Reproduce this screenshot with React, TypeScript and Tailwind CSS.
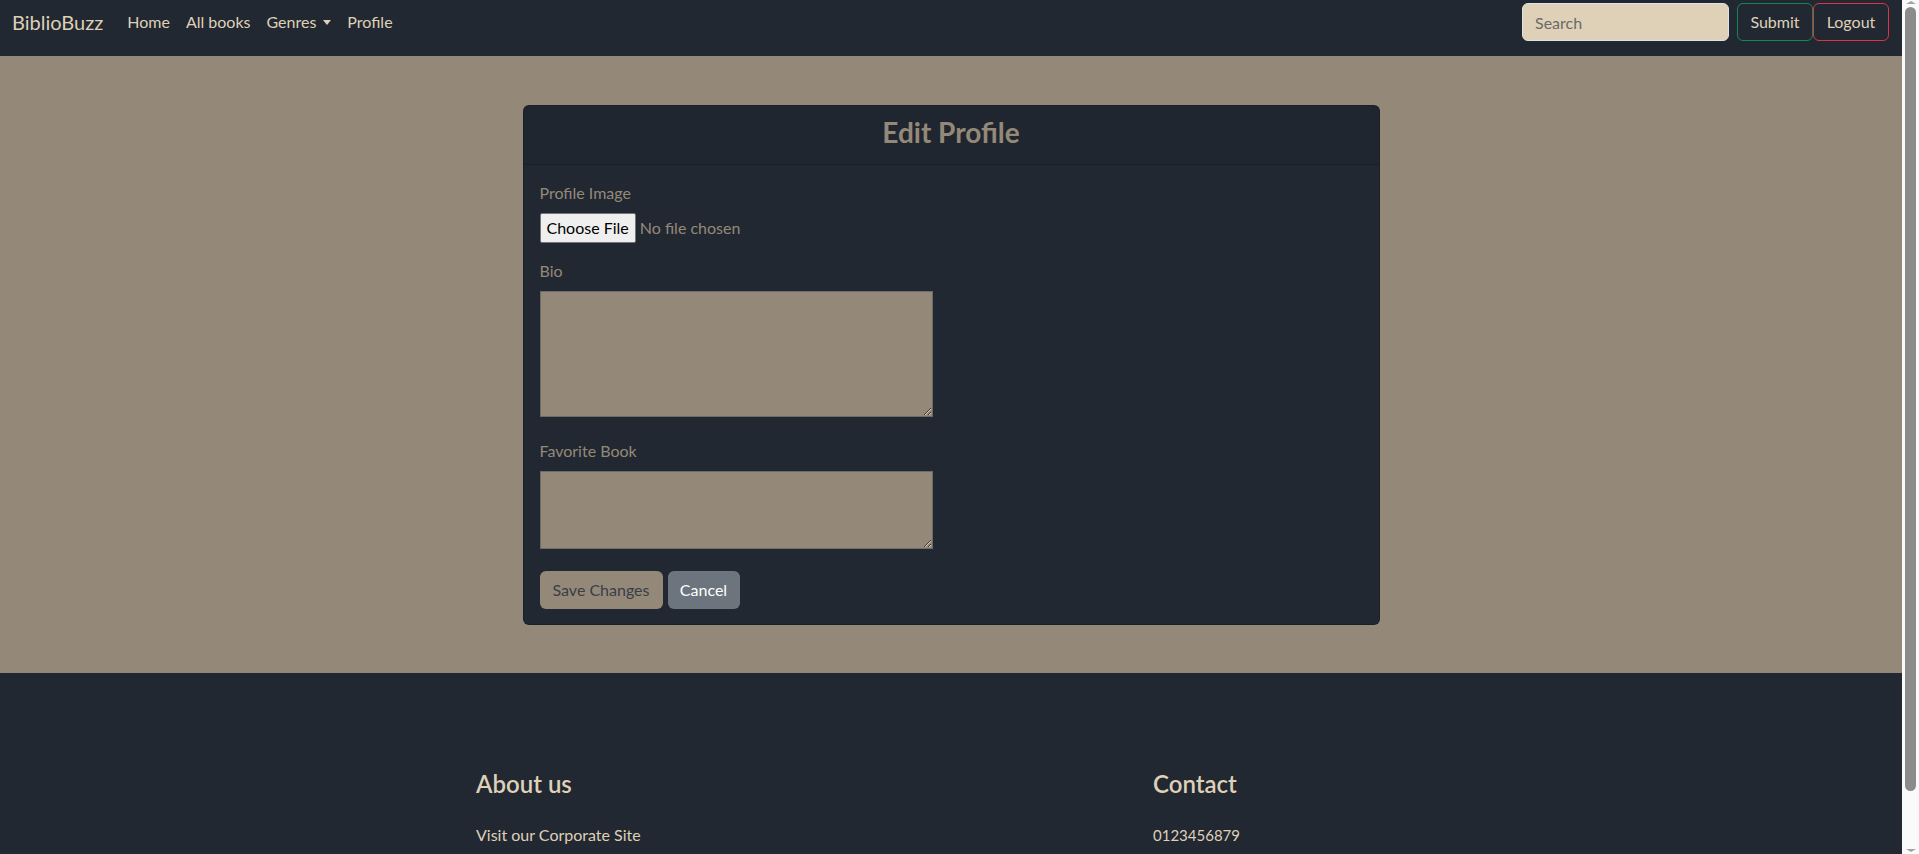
const navLinks = ['Home', 'All books', 'Genres', 'Profile'];

const Navbar = () => (
  <nav className="h-[56px] bg-[#222831] flex items-start justify-between pl-[12px] pr-[13px] pt-[3px]">
    <div className="flex items-center h-[38px]">
      <span className="text-[20px] text-[#DFD0B8] mr-[16px]">BiblioBuzz</span>
      <ul className="flex items-center">
        {navLinks.map((link) => (
          <li key={link} className="px-[8px] text-[16px] text-[#DFD0B8] flex items-center">
            {link}
            {link === 'Genres' && (
              <span className="ml-[7px] inline-block w-0 h-0 border-l-[4px] border-r-[4px] border-t-[5px] border-l-transparent border-r-transparent border-t-[#DFD0B8]"></span>
            )}
          </li>
        ))}
      </ul>
    </div>
    <div className="flex items-center">
      <input
        placeholder="Search"
        className="w-[207px] h-[38px] bg-[#DFD0B8] border border-[#dee2e6] rounded-[6px] px-[12px] text-[16px] placeholder:text-[#6b6a66] outline-none mr-[8px]"
      />
      <button className="h-[38px] w-[76px] border border-[#198754] rounded-[6px] text-[16px] text-[#DFD0B8]">
        Submit
      </button>
      <button className="h-[38px] w-[76px] border border-[#dc3545] rounded-[6px] text-[16px] text-[#DFD0B8]">
        Logout
      </button>
    </div>
  </nav>
);

const EditProfile = () => (
  <section className="bg-[#948979] pt-[49px] pb-[48px]">
    <div className="w-[857px] mx-auto bg-[#222831] border border-black/20 rounded-[6px]">
      <div className="h-[59px] flex items-center justify-center border-b border-black/20 bg-black/[0.03] pb-[7px]">
        <h3 className="text-[28px] font-bold text-[#948979] leading-none">Edit Profile</h3>
      </div>
      <form className="px-[16px] pt-[16px] pb-[15px] flex flex-col">
        <label className="text-[16px] text-[#948979] leading-[24px] mb-[8px]">Profile Image</label>
        <div className="flex items-center mb-[16px]">
          <span className="h-[30px] px-[6px] flex items-center bg-[#efefef] border border-[#767676] rounded-[2px] text-[16px] text-black">
            Choose File
          </span>
          <span className="ml-[4px] text-[16px] text-[#948979]">No file chosen</span>
        </div>
        <label className="text-[16px] text-[#948979] leading-[24px] mb-[8px]">Bio</label>
        <textarea className="w-[393px] h-[126px] bg-[#948979] border border-[#6d6b68] outline-none mb-[22px]"></textarea>
        <label className="text-[16px] text-[#948979] leading-[24px] mb-[8px]">Favorite Book</label>
        <textarea className="w-[393px] h-[78px] bg-[#948979] border border-[#6d6b68] outline-none mb-[22px]"></textarea>
        <div className="flex gap-[5px]">
          <button type="button" className="h-[38px] w-[123px] bg-[#948979] rounded-[6px] text-[16px] text-[#393E46]">
            Save Changes
          </button>
          <button type="button" className="h-[38px] w-[72px] bg-[#6c757d] rounded-[6px] text-[16px] text-white">
            Cancel
          </button>
        </div>
      </form>
    </div>
  </section>
);

const Footer = () => (
  <footer className="bg-[#222831] pt-[96px] pb-[40px]">
    <div className="w-[950px] mx-auto grid grid-cols-[677px_1fr]">
      <div>
        <h4 className="text-[24px] font-semibold text-[#DFD0B8] leading-[29px] mb-[25px]">About us</h4>
        <p className="text-[16px] text-[#DFD0B8] leading-[24px]">Visit our Corporate Site</p>
      </div>
      <div>
        <h4 className="text-[24px] font-semibold text-[#DFD0B8] leading-[29px] mb-[25px]">Contact</h4>
        <p className="text-[15px] text-[#DFD0B8] leading-[24px]">0123456879</p>
      </div>
    </div>
  </footer>
);

// browser scrollbar as seen in the screenshot
const ScrollStrip = () => (
  <div className="w-[17px] h-screen bg-[#fafafa] flex flex-col items-center shrink-0">
    <span className="mt-[1px] w-0 h-0 border-l-[5px] border-r-[5px] border-b-[3px] border-l-transparent border-r-transparent border-b-[#a3a3a3]"></span>
    <div className="mt-[3px] w-[11px] h-[784px] rounded-full bg-[#8b8b8b]"></div>
    <div className="flex-1"></div>
    <span className="mb-[2px] w-0 h-0 border-l-[5px] border-r-[5px] border-t-[3px] border-l-transparent border-r-transparent border-t-[#a3a3a3]"></span>
  </div>
);

export default function App() {
  return (
    <div className="h-screen flex overflow-hidden font-['Lato','Liberation_Sans',sans-serif]">
      <div className="w-[1902px] shrink-0 overflow-hidden">
        <Navbar />
        <EditProfile />
        <Footer />
      </div>
      <ScrollStrip />
    </div>
  );
}
